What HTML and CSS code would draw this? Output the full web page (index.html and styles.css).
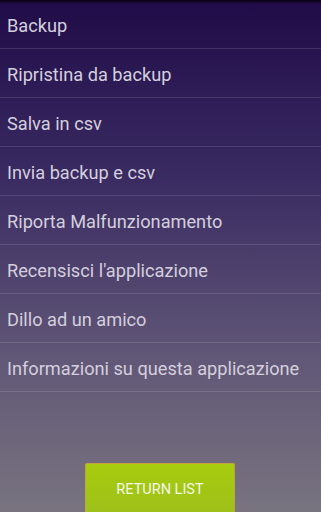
FILE: index.html
```html
<!DOCTYPE html>
<html lang="it">
<head>
    <meta charset="UTF-8">
    <meta name="viewport" content="width=device-width, initial-scale=1.0">
    <title>Menu</title>
    <link rel="stylesheet" href="styles.css">
</head>
<body>
    <div class="screen">
        <ul class="menu">
            <li class="menu-item">Backup</li>
            <li class="menu-item">Ripristina da backup</li>
            <li class="menu-item">Salva in csv</li>
            <li class="menu-item">Invia backup e csv</li>
            <li class="menu-item">Riporta Malfunzionamento</li>
            <li class="menu-item">Recensisci l'applicazione</li>
            <li class="menu-item">Dillo ad un amico</li>
            <li class="menu-item">Informazioni su questa applicazione</li>
        </ul>
        <div class="footer">
            <button class="btn-return">RETURN LIST</button>
        </div>
    </div>
</body>
</html>
```

FILE: styles.css
```css
* {
    margin: 0;
    padding: 0;
    box-sizing: border-box;
}

html, body {
    height: 100%;
}

body {
    font-family: Roboto, "Noto Sans", sans-serif;
    background: linear-gradient(to bottom, #200c48 0%, #3a2b62 35%, #615777 70%, #78747f 100%);
    overflow: hidden;
}

.screen {
    position: relative;
    height: 512px;
    display: flex;
    flex-direction: column;
}

.screen::before {
    content: "";
    position: absolute;
    top: 0;
    left: 0;
    right: 0;
    height: 4px;
    background: linear-gradient(to bottom, rgba(0, 0, 0, 0.8), rgba(0, 0, 0, 0));
}

.menu {
    list-style: none;
}

.menu-item {
    height: 49px;
    padding: 3px 7px 0;
    display: flex;
    align-items: center;
    font-size: 18.2px;
    color: #d4cfdd;
    border-bottom: 1px solid rgba(255, 255, 255, 0.12);
    white-space: nowrap;
}

.footer {
    flex: 1;
    display: flex;
    justify-content: center;
    align-items: flex-end;
}

.btn-return {
    width: 150px;
    height: 50px;
    margin-bottom: -1px;
    margin-left: -1px;
    background: linear-gradient(to bottom, #a8cc0e, #9ec01a);
    border: 1px solid #c7a23a;
    border-bottom: none;
    border-radius: 2px 2px 0 0;
    color: #f4f6e8;
    font-family: Roboto, "Noto Sans", sans-serif;
    font-size: 14.5px;
    padding-top: 1px;
}
```
